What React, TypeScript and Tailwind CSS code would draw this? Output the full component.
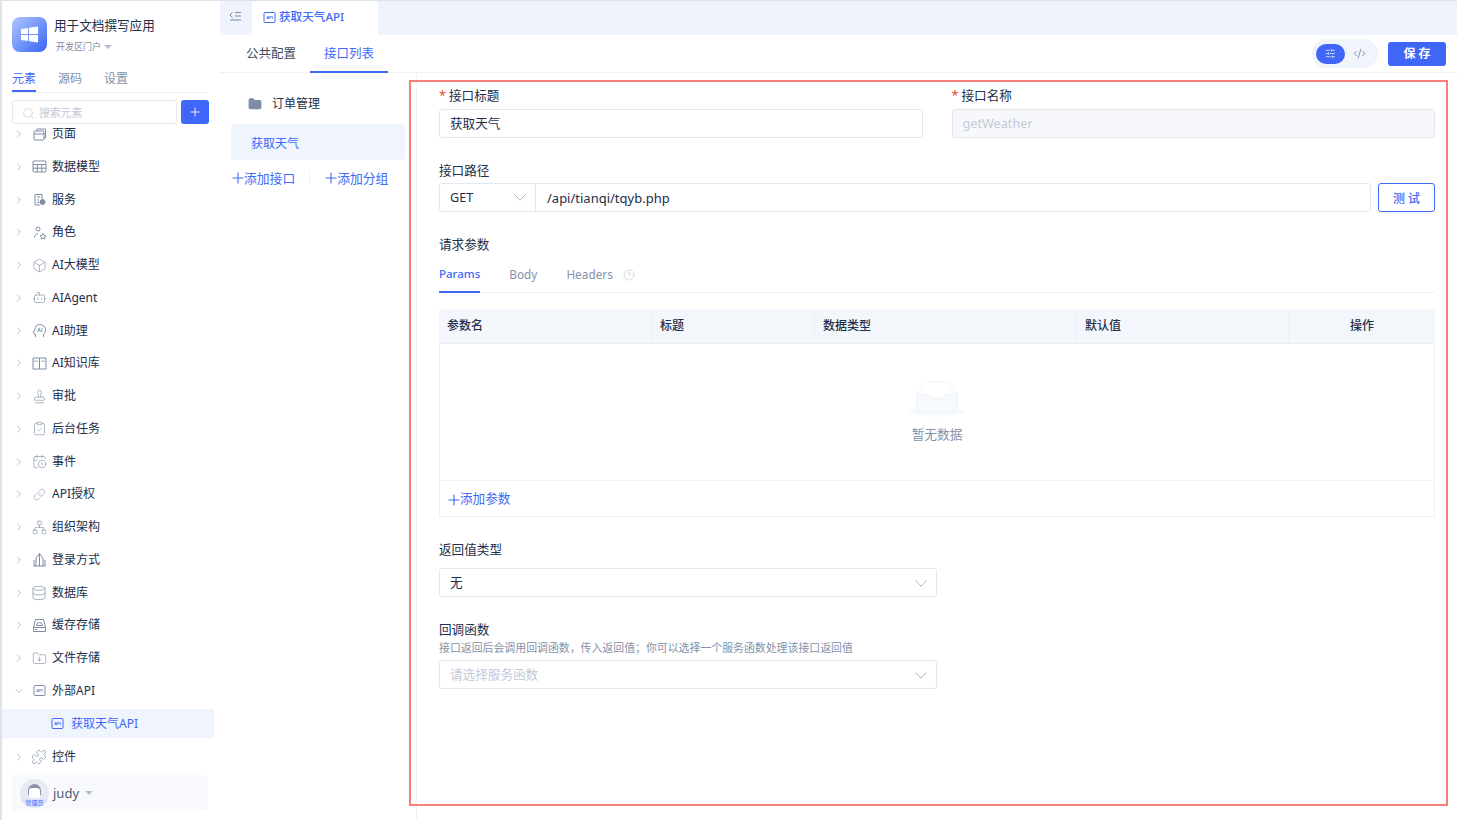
import React from 'react';
import { ChevronRight, ChevronDown, Search, Plus, Bot, Box, Stamp, ClipboardCheck, CalendarClock, Link, Network, Database, FolderDown, Puzzle, CircleHelp, CodeXml, SlidersHorizontal, Folder } from 'lucide-react';

const stroke = '#7f8da6';

function ApiIcon({ active }: { active?: boolean }) {
  const c = active ? '#4169f6' : stroke;
  return (
    <svg width="13" height="13" viewBox="0 0 13 13" fill="none">
      <rect x="1" y="1.500" width="11" height="10" rx="1" stroke={c} />
      <text x="6.500" y="8" fontSize="4" fontWeight="700" fill={c} textAnchor="middle" fontFamily="Liberation Sans">API</text>
    </svg>
  );
}

function Svg({ children }: { children: React.ReactNode }) {
  return <svg width="15" height="15" viewBox="0 0 15 15" fill="none" stroke={stroke} strokeWidth="1">{children}</svg>;
}

function BluePlus() {
  return <svg width="12" height="12" viewBox="0 0 12 12" fill="none" stroke="#4169f6" strokeWidth="1.100" className="shrink-0"><path d="M6 .500v11M.500 6h11" /></svg>;
}

const ic = { size: 15, strokeWidth: 1, color: stroke };
const items: [string, React.ReactNode][] = [
  ['页面', <Svg><rect x="2" y="4" width="10" height="9" rx="1" /><path d="M2 7h10M5 4V2h8.500v9H12" /></Svg>],
  ['数据模型', <Svg><rect x="1" y="2" width="13" height="11" rx="1" /><path d="M1 5.500h13M1 9.200h13M5.300 5.500V13M9.700 5.500V13" /></Svg>],
  ['服务', <Svg><path d="M8 13H3V2.500h7V7M5 5h3M5 8h2M5 10.500h2" /><circle cx="10.500" cy="10" r="2.500" fill={stroke} /></Svg>],
  ['角色', <Svg><circle cx="6" cy="4" r="2" /><path d="M2.500 12.500c0-2.500 1.500-4 3.500-4" /><path d="M11 8.500l1 1.800 2 .3-1.500 1.400.4 2-1.900-1-1.900 1 .4-2-1.500-1.400 2-.3z" /></Svg>],
  ['AI大模型', <Box {...ic} />],
  ['AIAgent', <Bot {...ic} />],
  ['AI助理', <Svg><path d="M3.500 14v-2.500H2.500L1.500 9l1.500-2.500C3 3 5 1.500 7.500 1.500c3.500 0 6 2.500 6 5.500 0 2-.8 3.300-2 4.500V14" /><text x="7.700" y="9.200" fontSize="5.500" fill={stroke} stroke="none" fontWeight="700" textAnchor="middle" fontFamily="Liberation Sans">AI</text></Svg>],
  ['AI知识库', <Svg><path d="M1 2h6.500v11H1zM7.500 2H14v11H7.500zM3 4.500v1.500M5 4.500v1.500M10 4.500v1.500M12 4.500v1.500" /></Svg>],
  ['审批', <Stamp {...ic} />],
  ['后台任务', <ClipboardCheck {...ic} />],
  ['事件', <CalendarClock {...ic} />],
  ['API授权', <Link {...ic} size={13} />],
  ['组织架构', <Network {...ic} />],
  ['登录方式', <Svg><path d="M1.500 14h12M4 14V6l3.500-4.500V14M7.500 1.500L11 6v8M2 14V8M13 14V8" /></Svg>],
  ['数据库', <Database {...ic} size={16} />],
  ['缓存存储', <Svg><path d="M3.500 1.500h8l2 8v4h-12v-4zM1.500 9.500h12M3 11.500h2" /><path d="M4.500 7.500a3 3 0 0 1 6 0z" /></Svg>],
  ['文件存储', <FolderDown {...ic} />],
];

function Row({ label, icon, open }: { label: string; icon: React.ReactNode; open?: boolean }) {
  return (
    <div className="flex h-[32.750px] items-center pl-[11px] text-[12px] text-[#222e4a]">
      {open ? <ChevronDown size={12} strokeWidth={1.100} color="#7f8da6" /> : <ChevronRight size={12} strokeWidth={1.100} color="#7f8da6" />}
      <span className="ml-[6px] flex w-[16px] justify-center">{icon}</span>
      <span className="ml-[5px]">{label}</span>
    </div>
  );
}

function Sidebar() {
  return (
    <aside className="flex h-full w-[218px] shrink-0 flex-col bg-white pl-[10px]">
      <div className="flex h-[62px] shrink-0 items-start pt-[16px]">
        <div className="flex h-[35px] w-[35px] items-center justify-center rounded-[8px] bg-gradient-to-br from-[#b4c5fb] to-[#3a62f5]">
          <svg width="17" height="17" viewBox="0 0 17 17" fill="white"><path d="M0 3l7-1v6H0zM8 1.800l9-1.300V8H8zM0 9h7v6l-7-1zM8 9h9v7.500l-9-1.300z" /></svg>
        </div>
        <div className="ml-[7px]">
          <div className="text-[12.600px] leading-[18px] text-[#222e4a]">用于文档撰写应用</div>
          <div className="ml-[2px] mt-[5px] flex items-center text-[9px] leading-[13px] text-[#7d8aa3]">
            开发区门户
            <span className="ml-[3px] h-0 w-0 border-x-[4px] border-t-[4px] border-x-transparent border-t-[#b6bfcf]" />
          </div>
        </div>
      </div>
      <div className="flex h-[30px] w-[196px] shrink-0 items-end gap-[22px] border-b border-[#e9edf4] text-[12px] text-[#8492a9]">
        <span className="h-[29px] border-b-2 border-[#4169f6] pt-[7px] leading-[18px] text-[#4169f6]">元素</span>
        <span className="h-[29px] pt-[7px] leading-[18px]">源码</span>
        <span className="h-[29px] pt-[7px] leading-[18px]">设置</span>
      </div>
      <div className="mt-[7px] flex h-[24px] w-[197px] shrink-0 gap-[4px]">
        <div className="flex w-[165px] items-center rounded-[3px] border border-[#e3e7ef] pl-[9px] pt-[2px] text-[10.800px] text-[#c3cad7]">
          <Search size={13} strokeWidth={1} color="#b7c0cf" />
          <span className="ml-[4px]">搜索元素</span>
        </div>
        <div className="flex w-[28px] items-center justify-center rounded-[3px] bg-[#3f66f6]">
          <Plus size={14} color="white" strokeWidth={1.500} />
        </div>
      </div>
      <div className="-ml-[10px] min-h-0 flex-1 overflow-hidden pr-[6px]">
        <div className="-mt-[6.200px]">
          {items.map(([l, i]) => <Row key={l} label={l} icon={i} />)}
          <Row label="外部API" icon={<ApiIcon />} open />
          <div className="mb-[2px] mt-[2px] flex h-[29px] items-center bg-[#f0f4fd] pl-[49px] text-[12px] text-[#4169f6]">
            <ApiIcon active />
            <span className="ml-[7px]">获取天气API</span>
          </div>
          <Row label="控件" icon={<Puzzle {...ic} size={16} />} />
        </div>
      </div>
      <div className="mb-[9px] flex h-[36px] w-[196px] shrink-0 items-center rounded-[4px] bg-[#f8f9fc] pl-[8px]">
        <div className="relative h-[29px] w-[29px] overflow-hidden rounded-full bg-[#e6ebf3]">
          <span className="absolute left-[8px] top-[5px] h-[11px] w-[13px] rounded-t-full bg-[#8a93a5]" />
          <span className="absolute left-[9px] top-[9px] h-[10px] w-[11px] rounded-[3px] bg-white" />
          <span className="absolute bottom-[1px] left-0 flex h-[8px] w-[29px] items-center justify-center rounded-full bg-[#d9e3fd] text-[6px] leading-[8px] text-[#4169f6]">管理员</span>
        </div>
        <span className="ml-[4px] pt-px text-[13px] text-[#4f5b73]">judy</span>
        <span className="ml-[6px] h-0 w-0 border-x-[4px] border-t-[4px] border-x-transparent border-t-[#b6bfcf]" />
      </div>
    </aside>
  );
}

function Label({ children, req }: { children: React.ReactNode; req?: boolean }) {
  return (
    <div className="h-[18px] pt-px text-[12.600px] leading-[18px] text-[#222e4a]">
      {req && <span className="mr-[3px] text-[#f04438]">*</span>}
      {children}
    </div>
  );
}

function Chev() {
  return <svg width="12" height="7" viewBox="0 0 12 7" fill="none" stroke="#a9b4c6"><path d="M.500.500L6 6.200 11.500.500" /></svg>;
}

function Select({ text, placeholder }: { text: string; placeholder?: boolean }) {
  return (
    <div className={`flex h-[29px] w-[498px] items-center justify-between rounded-[3px] border border-[#e3e7f0] pl-[10px] pr-[9px] pt-px text-[12.600px] ${placeholder ? 'text-[#c3cad7]' : 'text-[#222e4a]'}`}>
      <span className="pt-px">{text}</span>
      <Chev />
    </div>
  );
}

function Form() {
  return (
    <div className="min-w-0 flex-1 px-[22px] pt-[13px]">
      <div className="flex gap-[29px]">
        <div className="flex-1">
          <Label req>接口标题</Label>
          <div className="mt-[5px] flex h-[29px] items-center rounded-[3px] border border-[#e3e7f0] pl-[10px] pt-px text-[12.600px] text-[#222e4a]">获取天气</div>
        </div>
        <div className="flex-1">
          <Label req>接口名称</Label>
          <div className="mt-[5px] flex h-[29px] items-center rounded-[3px] border border-[#e3e7f0] bg-[#f7f8fb] pl-[10px] text-[12.700px] text-[#c3cad7]">getWeather</div>
        </div>
      </div>
      <div className="mt-[23px]"><Label>接口路径</Label></div>
      <div className="mt-[4px] flex h-[29px] gap-[7px]">
        <div className="flex flex-1 rounded-[3px] border border-[#e3e7f0] text-[12.600px] text-[#222e4a]">
          <div className="flex w-[96px] items-center justify-between border-r border-[#e3e7f0] pl-[10px] pr-[9px]">
            <span className="pt-[2px]">GET</span>
            <Chev />
          </div>
          <div className="flex items-center pl-[11px] pt-[2px] text-[13px]">/api/tianqi/tqyb.php</div>
        </div>
        <div className="flex w-[57px] items-center justify-center rounded-[3px] border border-[#4169f6] pt-[2px] text-[12px] font-medium text-[#4169f6]">测 试</div>
      </div>
      <div className="mt-[23px]"><Label>请求参数</Label></div>
      <div className="flex h-[40px] items-stretch gap-[29px] border-b border-[#eef1f6] text-[11.800px] text-[#8492a9]">
        <span className="-mb-px flex items-center border-b-2 border-[#4169f6] pt-[4px] text-[11.500px] font-medium text-[#4169f6]">Params</span>
        <span className="flex items-center pt-[4px]">Body</span>
        <span className="flex items-center pt-[4px]">Headers<CircleHelp size={12} strokeWidth={1} color="#a9b4c6" className="ml-[10px]" /></span>
      </div>
      <div className="mt-[16px] h-[208px] rounded-t-[4px] border-x border-b border-[#eef1f6]">
        <div className="-mx-px flex h-[35px] rounded-t-[4px] border-b border-[#e9edf4] bg-[#f3f6fb] text-[12px] font-medium text-[#222e4a]">
          <div className="flex w-[213px] items-center border-r border-[#eef1f6] pl-[8px]">参数名</div>
          <div className="flex w-[163px] items-center border-r border-[#eef1f6] pl-[8px]">标题</div>
          <div className="flex w-[262px] items-center border-r border-[#eef1f6] pl-[8px]">数据类型</div>
          <div className="flex w-[212px] items-center border-r border-[#eef1f6] pl-[8px]">默认值</div>
          <div className="flex flex-1 items-center justify-center">操作</div>
        </div>
        <div className="flex h-[137px] flex-col items-center border-b border-[#f3f5f9] pt-[36px]">
          <svg width="58" height="37" viewBox="0 0 58 37" fill="none">
            <ellipse cx="29" cy="32" rx="28" ry="4.500" fill="#f8fafd" />
            <path d="M9 14L18 2h22l9 12v16a2 2 0 0 1-2 2H11a2 2 0 0 1-2-2z" fill="#fff" stroke="#f1f4f9" />
            <path d="M9 14h10c2 0 2 4 5 4h10c3 0 3-4 5-4h10v16a2 2 0 0 1-2 2H11a2 2 0 0 1-2-2z" fill="#f6f9fd" stroke="#f1f4f9" />
          </svg>
          <div className="mt-[8px] text-[12.700px] leading-[18px] text-[#8492a9]">暂无数据</div>
        </div>
        <div className="flex h-[35px] items-center pl-[8px] pt-[2px] text-[12.600px] text-[#4169f6]">
          <BluePlus />添加参数
        </div>
      </div>
      <div className="mt-[23px]"><Label>返回值类型</Label></div>
      <div className="mt-[10px]"><Select text="无" /></div>
      <div className="mt-[23px]"><Label>回调函数</Label></div>
      <div className="mt-[2px] h-[16px] text-[10.900px] leading-[16px] text-[#8492a9]">接口返回后会调用回调函数，传入返回值；你可以选择一个服务函数处理该接口返回值</div>
      <div className="mt-[4px]"><Select text="请选择服务函数" placeholder /></div>
    </div>
  );
}

export default function App() {
  return (
    <div className="relative flex h-[820px] w-[1457px] overflow-hidden border-l-2 border-t border-[#dfe2e8] bg-white font-['Noto_Sans','Noto_Sans_CJK_SC',sans-serif]">
      <Sidebar />
      <main className="flex min-w-0 flex-1 flex-col">
        <div className="flex h-[34px] shrink-0 items-stretch bg-[#eff3fc]">
          <div className="flex w-[32px] justify-start pl-[9px] pt-[10px]">
            <svg width="12" height="10" viewBox="0 0 12 10" fill="none" stroke="#7d8aa3"><path d="M3.500 1.500L1 4l2.500 2.500M6 1.500h6M6 5h6M1 9h11" /></svg>
          </div>
          <div className="flex w-[126px] items-center rounded-t-[4px] bg-white pb-[2px] pl-[11px] text-[11.600px] font-medium text-[#4169f6]">
            <ApiIcon active />
            <span className="ml-[3px]">获取天气API</span>
          </div>
        </div>
        <div className="flex h-[38px] shrink-0 items-stretch border-b border-[#eef1f6] pl-[26px] pr-[11px] text-[12.500px]">
          <span className="flex items-center pt-[2px] text-[#3f4a61]">公共配置</span>
          <span className="relative -mb-px ml-[14px] flex w-[78px] items-center justify-center border-b-2 border-[#4169f6] pt-[2px] text-[#4169f6]">接口列表</span>
          <div className="ml-auto flex items-center">
            <div className="flex h-[29px] w-[66px] items-center rounded-full bg-[#f0f4fb] pl-[4px]">
              <span className="flex h-[20px] w-[29px] items-center justify-center rounded-full bg-[#3f66f6]"><SlidersHorizontal size={11} color="#d3ddfd" /></span>
              <CodeXml size={13} strokeWidth={1.300} color="#5f6b82" className="ml-[8px]" />
            </div>
            <span className="ml-[10px] flex h-[24px] w-[58px] items-center justify-center rounded-[3px] bg-[#3f66f6] pt-px text-[12px] font-bold text-white">保 存</span>
          </div>
        </div>
        <div className="flex min-h-0 flex-1">
          <div className="w-[197px] shrink-0 border-r border-[#eef1f6] text-[12.500px]">
            <div className="flex h-[51px] items-center pl-[28px] pt-[10px] text-[#222e4a]">
              <Folder size={14} fill="#7f8ca3" color="#7f8ca3" />
              <span className="ml-[10px] text-[12px]">订单管理</span>
            </div>
            <div className="ml-[11px] flex h-[36px] w-[174px] items-center rounded-[4px] bg-[#f0f4fd] pl-[20px] pt-[3px] text-[12px] text-[#4169f6]">获取天气</div>
            <div className="mt-[9px] flex h-[18px] items-center pl-[12px] text-[12.800px] leading-[18px] text-[#4169f6]">
              <BluePlus />添加接口
              <span className="ml-[14px] mr-[15px] h-[12px] w-px bg-[#eef1f6]" />
              <BluePlus />添加分组
            </div>
          </div>
          <Form />
        </div>
      </main>
      <div className="pointer-events-none absolute left-[407px] top-[79px] h-[726px] w-[1039px] border-2 border-[#f7807a]" />
    </div>
  );
}
